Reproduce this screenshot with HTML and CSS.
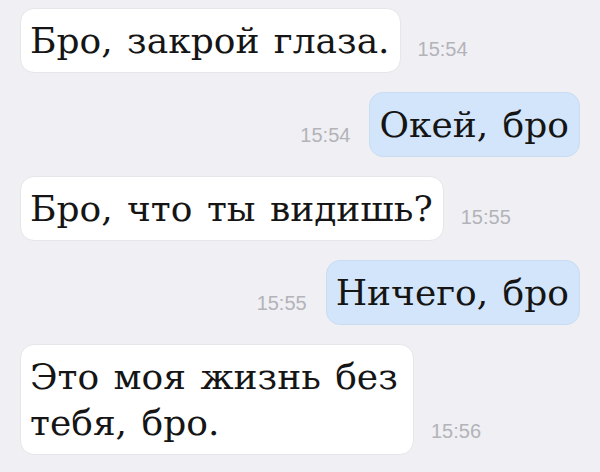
FILE: index.html
```html
<!DOCTYPE html>
<html>
<head>
    <meta charset="UTF-8">
    <title>Бро</title>
    <link rel="stylesheet" href="styles.css">
</head>
<body>

<div class="chat">
    <div class="row in">
        <div class="bubble">Бро, закрой глаза.</div>
        <span class="time">15:54</span>
    </div>
    <div class="row out">
        <span class="time">15:54</span>
        <div class="bubble">Окей, бро</div>
    </div>
    <div class="row in">
        <div class="bubble">Бро, что ты видишь?</div>
        <span class="time">15:55</span>
    </div>
    <div class="row out">
        <span class="time">15:55</span>
        <div class="bubble">Ничего, бро</div>
    </div>
    <div class="row in">
        <div class="bubble wide">Это моя жизнь без тебя, бро.</div>
        <span class="time">15:56</span>
    </div>
</div>

</body>
</html>
```

FILE: styles.css
```css
* { margin: 0; padding: 0; box-sizing: border-box;}
html, body { height: 100%;}
body { background: #efeff4; font-family: "DejaVu Serif", "Liberation Serif", serif; color: #151515;}
.chat { display: flex; flex-direction: column; gap: 19px; padding: 8px 20px 0 20px;}
.row { display: flex; align-items: flex-end;}
.row.in { gap: 17px;}
.row.out { justify-content: flex-end; gap: 19px;}
.bubble { background: #fff; border: 1px solid #e6e6ea; border-radius: 14px; padding: 8.5px 10px 8.5px 9px; font-size: 36px; line-height: 46px; word-spacing: 3px; white-space: nowrap;}
.out .bubble { background: #d3e5fb; border-color: #c9dcf3;}
.bubble.wide { white-space: normal; max-width: 394px;}
.time { font-family: "Liberation Sans", Arial, sans-serif; font-size: 20px; line-height: 20px; color: #b3b3b8; margin-bottom: 14px;}
.out .time { margin-bottom: 12px;}
```
